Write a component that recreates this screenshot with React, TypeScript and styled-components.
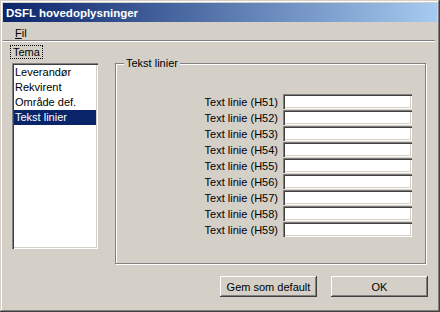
import React from "react";
import styled, { createGlobalStyle } from "styled-components";

const Global = createGlobalStyle`
  html, body { margin: 0; padding: 0; background: #d4d0c8; }
  * { box-sizing: border-box; }
`;

const Window = styled.div`
  width: 440px;
  height: 312px;
  padding: 3px;
  background: #d4d0c8;
  box-shadow: inset -1px -1px #404040, inset 1px 1px #d4d0c8, inset -2px -2px #808080, inset 2px 2px #ffffff;
  display: flex;
  flex-direction: column;
  font-family: "Liberation Sans", Arial, sans-serif;
  font-size: 11px;
  color: #000;
`;

const TitleBar = styled.div`
  height: 19px;
  display: flex;
  align-items: center;
  padding-left: 3px;
  background: linear-gradient(to right, #0a246a, #a6caf0);
  color: #fff;
  font-weight: bold;
  font-size: 11.5px;
`;

const MenuBar = styled.div`
  height: 18px;
  display: flex;
  align-items: center;
  padding-left: 12px;
`;

const MenuItem = styled.span`
  padding-top: 3px;
  u { text-decoration: underline; }
`;

const Separator = styled.div`
  height: 2px;
  border-top: 1px solid #808080;
  border-bottom: 1px solid #ffffff;
  margin-right: 2px;
`;

const Body = styled.div`
  flex: 1;
  display: grid;
  grid-template-columns: 86px 1fr;
  column-gap: 17px;
  padding: 2px 10px 0 9px;
`;

const LeftCol = styled.div`
  display: flex;
  flex-direction: column;
  align-items: flex-start;
`;

const TabLabel = styled.div`
  height: 14px;
  margin-top: 1px;
  margin-left: -2px;
  padding: 0 2px;
  line-height: 13px;
  border: 1px dotted #000;
`;

const ListBox = styled.div`
  margin-top: 4px;
  width: 86px;
  height: 186px;
  background: #fff;
  padding: 2px;
  box-shadow: inset 1px 1px #808080, inset 2px 2px #404040, inset -1px -1px #ffffff, inset -2px -2px #d4d0c8;
`;

const ListItem = styled.div<{ $selected?: boolean }>`
  height: 15px;
  line-height: 15px;
  padding-left: 1px;
  white-space: nowrap;
  background: ${(p) => (p.$selected ? "#0a246a" : "transparent")};
  color: ${(p) => (p.$selected ? "#fff" : "#000")};
`;

const RightCol = styled.div`
  display: flex;
  flex-direction: column;
  padding-top: 19px;
`;

const GroupBox = styled.div`
  position: relative;
  height: 201px;
  margin-right: 1px;
  border: 1px solid #808080;
  box-shadow: inset 1px 1px #ffffff, 1px 1px #ffffff;
  padding: 30px 13px 0 0;
`;

const Legend = styled.span`
  position: absolute;
  top: -7px;
  left: 8px;
  padding: 0 2px;
  line-height: 13px;
  background: #d4d0c8;
`;

const FieldGrid = styled.div`
  display: grid;
  grid-template-columns: auto 129px;
  column-gap: 5px;
  row-gap: 1px;
  justify-content: end;
  align-items: center;
`;

const FieldLabel = styled.label`
  text-align: right;
  white-space: nowrap;
`;

const TextInput = styled.div`
  height: 15px;
  background: #fff;
  box-shadow: inset 1px 1px #808080, inset 2px 2px #404040, inset -1px -1px #ffffff, inset -2px -2px #d4d0c8;
`;

const ButtonRow = styled.div`
  display: flex;
  justify-content: flex-end;
  gap: 14px;
  margin-top: 12px;
  margin-right: -1px;
`;

const Button = styled.div`
  width: 97px;
  height: 21px;
  display: flex;
  align-items: center;
  justify-content: center;
  background: #d4d0c8;
  box-shadow: inset -1px -1px #404040, inset 1px 1px #ffffff, inset -2px -2px #808080, inset 2px 2px #d4d0c8;
`;

const items = ["Leverandør", "Rekvirent", "Område def.", "Tekst linier"];
const fields = [51, 52, 53, 54, 55, 56, 57, 58, 59];

export default function App() {
  return (
    <>
      <Global />
      <Window>
        <TitleBar>DSFL hovedoplysninger</TitleBar>
        <MenuBar>
          <MenuItem>
            <u>F</u>il
          </MenuItem>
        </MenuBar>
        <Separator />
        <Body>
          <LeftCol>
            <TabLabel>Tema</TabLabel>
            <ListBox>
              {items.map((it, i) => (
                <ListItem key={it} $selected={i === 3}>
                  {it}
                </ListItem>
              ))}
            </ListBox>
          </LeftCol>
          <RightCol>
            <GroupBox>
              <Legend>Tekst linier</Legend>
              <FieldGrid>
                {fields.map((n) => (
                  <React.Fragment key={n}>
                    <FieldLabel>Text linie (H{n})</FieldLabel>
                    <TextInput />
                  </React.Fragment>
                ))}
              </FieldGrid>
            </GroupBox>
            <ButtonRow>
              <Button>Gem som default</Button>
              <Button>OK</Button>
            </ButtonRow>
          </RightCol>
        </Body>
      </Window>
    </>
  );
}
